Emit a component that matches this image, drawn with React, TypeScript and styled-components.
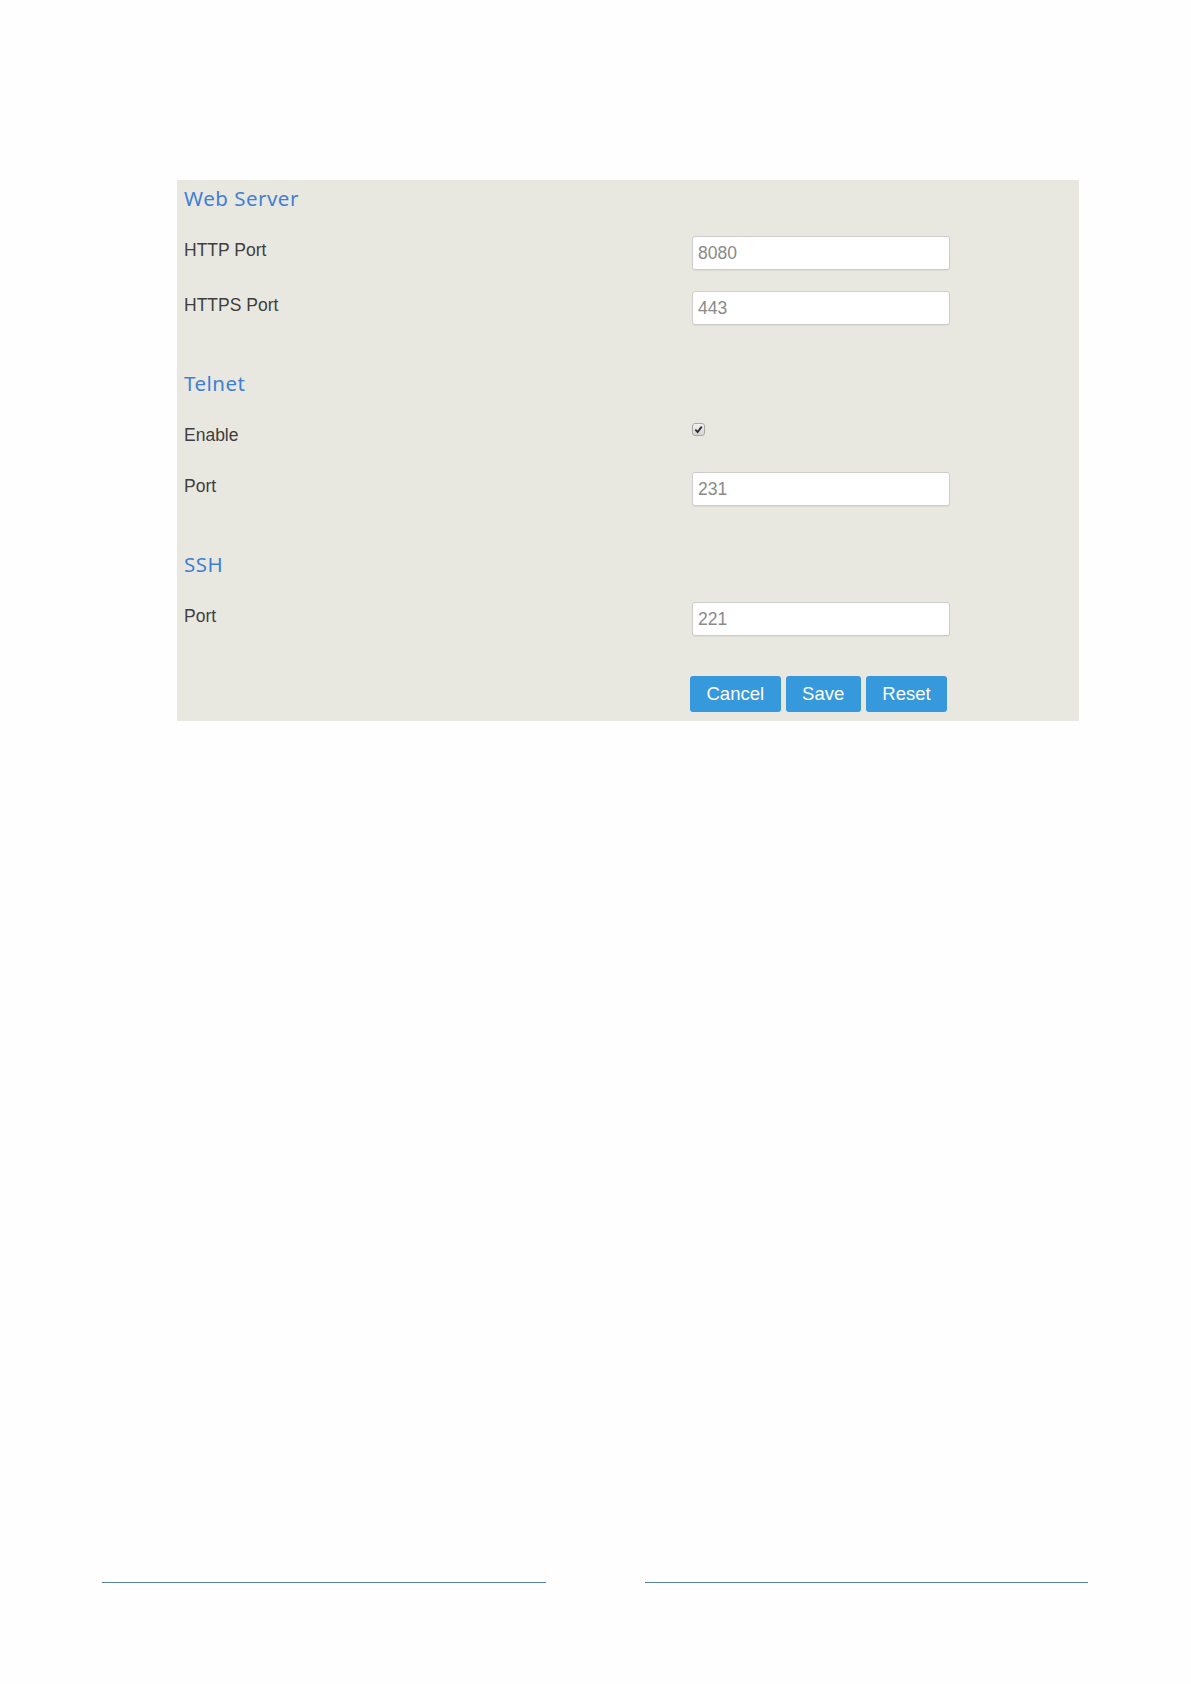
import React from "react";
import styled, {createGlobalStyle} from "styled-components";

const GlobalStyle = createGlobalStyle`
  html, body {
    margin: 0;
    padding: 0;
    background: #fefefe;
  }
  body {
    font-family: "Liberation Sans", Arial, sans-serif;
  }
`;

const Page = styled.div`
  width: 1191px;
  min-height: 1684px;
  box-sizing: border-box;
  padding-top: 180px;
`;

const Panel = styled.form`
  margin-left: 177px;
  width: 902px;
  box-sizing: border-box;
  background: #e9e8e0;
  padding: 7px 0 9px 7px;
  display: flex;
  flex-direction: column;
  gap: 47px;
`;

const Section = styled.section`
  display: flex;
  flex-direction: column;
  gap: 21px;
`;

const SectionTitle = styled.h3`
  margin: -1.5px 0 5.5px;
  font-family: "Noto Sans", "Open Sans", sans-serif;
  font-weight: 400;
  font-size: 20.5px;
  line-height: 24px;
  letter-spacing: 0.5px;
  color: #3f7fd4;
`;

const FieldRow = styled.div<{$compact?: boolean}>`
  display: grid;
  grid-template-columns: 508px 1fr;
  align-items: start;
  min-height: ${(p) => (p.$compact ? "30px" : "34px")};
`;

const Label = styled.label`
  padding-top: 4px;
  font-size: 17.5px;
  line-height: 20px;
  color: #3e3e3e;
`;

const TextInput = styled.input`
  width: 258px;
  height: 34px;
  box-sizing: border-box;
  margin: 0;
  padding: 0 5px;
  border: 1px solid #cdcdcd;
  border-radius: 3px;
  background: #fff;
  box-shadow: 0 1px 1px rgba(0, 0, 0, 0.06);
  font-family: "Liberation Sans", Arial, sans-serif;
  font-size: 17.5px;
  color: #8a8a8a;
  outline: none;
`;

const CheckBox = styled.span`
  margin-top: 2px;
  width: 13px;
  height: 13px;
  box-sizing: border-box;
  border: 1px solid #a8a8a8;
  border-radius: 3px;
  background: linear-gradient(#f2f2f2, #d4d4d4);
  display: flex;
  align-items: center;
  justify-content: center;

  svg {
    width: 9px;
    height: 9px;
  }
`;

const ButtonRow = styled.div`
  margin-top: -7px;
  padding-left: 506px;
  display: flex;
  gap: 5px;
`;

const Button = styled.button`
  height: 36px;
  padding: 0 16.5px;
  border: none;
  border-radius: 3px;
  background: #3699dc;
  color: #fff;
  font-family: "Liberation Sans", Arial, sans-serif;
  font-size: 18.5px;
  cursor: pointer;
`;

const Footer = styled.footer`
  margin-top: 861px;
  padding-left: 102px;
  display: flex;
  gap: 99px;
`;

const Rule = styled.div<{$width: number}>`
  width: ${(p) => p.$width}px;
  height: 1px;
  background: #58809e;
`;

type Field = {
  label: string;
  value?: string;
  checked?: boolean;
};

type Group = {
  title: string;
  fields: Field[];
};

const groups: Group[] = [
  {
    title: "Web Server",
    fields: [
      {label: "HTTP Port", value: "8080"},
      {label: "HTTPS Port", value: "443"},
    ],
  },
  {
    title: "Telnet",
    fields: [
      {label: "Enable", checked: true},
      {label: "Port", value: "231"},
    ],
  },
  {
    title: "SSH",
    fields: [{label: "Port", value: "221"}],
  },
];

function Check() {
  return (
    <CheckBox>
      <svg viewBox="0 0 10 10">
        <path d="M1.5 5.2 L4 7.8 L8.6 1.8" fill="none" stroke="#2b2b2b" strokeWidth="2"/>
      </svg>
    </CheckBox>
  );
}

export default function App() {
  return (
    <Page>
      <GlobalStyle/>
      <Panel onSubmit={(e) => e.preventDefault()}>
        {groups.map((group) => (
          <Section key={group.title}>
            <SectionTitle>{group.title}</SectionTitle>
            {group.fields.map((field) => (
              <FieldRow key={field.label} $compact={field.checked !== undefined}>
                <Label>{field.label}</Label>
                {field.checked !== undefined ? (
                  <Check/>
                ) : (
                  <TextInput defaultValue={field.value}/>
                )}
              </FieldRow>
            ))}
          </Section>
        ))}
        <ButtonRow>
          <Button type="button">Cancel</Button>
          <Button type="button">Save</Button>
          <Button type="button">Reset</Button>
        </ButtonRow>
      </Panel>
      <Footer>
        <Rule $width={444}/>
        <Rule $width={443}/>
      </Footer>
    </Page>
  );
}
